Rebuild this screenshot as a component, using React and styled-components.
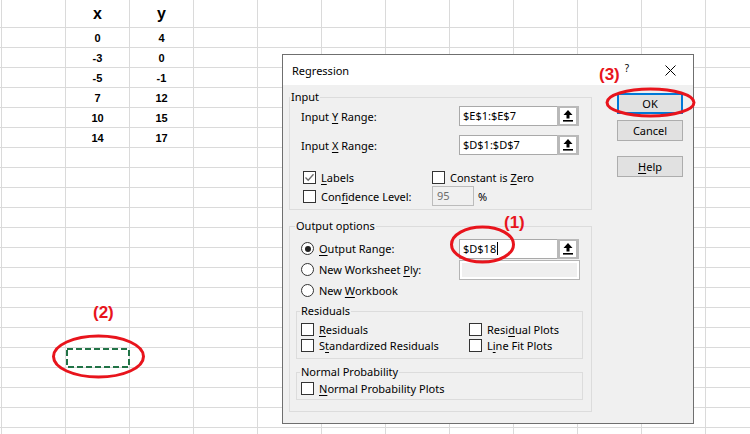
import React from "react";
import styled, { createGlobalStyle } from "styled-components";

const GlobalStyle = createGlobalStyle`
  html, body {
    margin: 0;
    padding: 0;
    background: #ffffff;
  }
  body {
    overflow: hidden;
  }
`;

const data = [
  ["x", "y"],
  ["0", "4"],
  ["-3", "0"],
  ["-5", "-1"],
  ["7", "12"],
  ["10", "15"],
  ["14", "17"],
];

const ROWS = 22;
const COLS = 13;

function UpArrow() {
  return (
    <svg width="10" height="12" viewBox="0 0 10 12">
      <polygon points="5,0 9.5,5 6.5,5 6.5,8.5 3.5,8.5 3.5,5 0.5,5" fill="#000" />
      <rect x="0" y="10" width="10" height="1.6" fill="#000" />
    </svg>
  );
}

function RefField({ value, caret }) {
  return (
    <FieldFrame>
      <TextBox>
        {value}
        {caret && <Caret />}
      </TextBox>
      <RefButton>
        <RefInner>
          <UpArrow />
        </RefInner>
      </RefButton>
    </FieldFrame>
  );
}

function Check({ checked, w, children }) {
  return (
    <ChoiceItem $w={w}>
      <Box>
        {checked && (
          <svg width="11" height="11" viewBox="0 0 11 11">
            <polyline points="1.5,5.5 4.2,8.3 9.5,2.2" fill="none" stroke="#6b6b6b" strokeWidth="1.3" />
          </svg>
        )}
      </Box>
      <span>{children}</span>
    </ChoiceItem>
  );
}

function Radio({ checked, w, children }) {
  return (
    <ChoiceItem $w={w}>
      <Round>{checked && <Dot />}</Round>
      <span>{children}</span>
    </ChoiceItem>
  );
}

export default function App() {
  return (
    <>
      <GlobalStyle />
      <Page>
        {/* spreadsheet behind */}
        <Sheet>
          {Array.from({ length: ROWS }).map((_, r) =>
            Array.from({ length: COLS }).map((_, c) => {
              let val = null;
              if (data[r] && c === 2) val = data[r][0];
              if (data[r] && c === 3) val = data[r][1];
              return (
                <Cell key={r + "-" + c} $head={r === 0}>
                  {val}
                </Cell>
              );
            })
          )}
        </Sheet>

        {/* dialog window */}
        <Dialog>
          <TitleBar>
            <Title>Regression</Title>
            <HelpMark>?</HelpMark>
            <svg width="11" height="11" viewBox="0 0 11 11">
              <path d="M0.5 0.5 L10.5 10.5 M10.5 0.5 L0.5 10.5" stroke="#000" strokeWidth="1" />
            </svg>
          </TitleBar>
          <Body>
            <Main>
              <Group $w={303}>
                <Legend $x={0}>Input</Legend>
                <FieldRow $mt={2}>
                  <FieldLabel>
                    Input <Key>Y</Key> Range:
                  </FieldLabel>
                  <RefField value="$E$1:$E$7" />
                </FieldRow>
                <FieldRow $mt={9}>
                  <FieldLabel>
                    Input <Key>X</Key> Range:
                  </FieldLabel>
                  <RefField value="$D$1:$D$7" />
                </FieldRow>
                <OptionRow $mt={13} $h={18} $pl={13}>
                  <Check checked w={129}>
                    <Key>L</Key>abels
                  </Check>
                  <Check>
                    Constant is <Key>Z</Key>ero
                  </Check>
                </OptionRow>
                <OptionRow $h={20} $pl={13} $mb={3}>
                  <Check w={129}>
                    Con<Key>f</Key>idence Level:
                  </Check>
                  <DisabledBox>95</DisabledBox>
                  <Percent>%</Percent>
                </OptionRow>
              </Group>

              <Group $w={303} $mt={9} $pb={11}>
                <Legend $x={5}>Output options</Legend>
                <RadioList>
                  <OptionRow $h={21} $pl={11}>
                    <Radio checked w={158}>
                      <Key>O</Key>utput Range:
                    </Radio>
                    <RefField value="$D$18" caret />
                  </OptionRow>
                  <OptionRow $h={21} $pl={11}>
                    <Radio w={158}>
                      New Worksheet <Key>P</Key>ly:
                    </Radio>
                    <BlankField />
                  </OptionRow>
                  <OptionRow $h={21} $pl={11}>
                    <Radio>
                      New <Key>W</Key>orkbook
                    </Radio>
                  </OptionRow>
                </RadioList>

                <Group $w={287} $mt={3} $ml={6} $pb={5}>
                  <Legend $x={3}>Residuals</Legend>
                  <OptionRow $mt={3} $h={16} $pl={4}>
                    <Check w={168}>
                      <Key>R</Key>esiduals
                    </Check>
                    <Check>
                      Resi<Key>d</Key>ual Plots
                    </Check>
                  </OptionRow>
                  <OptionRow $h={16} $pl={4}>
                    <Check w={168}>
                      S<Key>t</Key>andardized Residuals
                    </Check>
                    <Check>
                      L<Key>i</Key>ne Fit Plots
                    </Check>
                  </OptionRow>
                </Group>

                <Group $w={287} $mt={6} $ml={6} $pb={3}>
                  <Legend $x={3}>Normal Probability</Legend>
                  <OptionRow $mt={1} $h={16} $pl={4}>
                    <Check>
                      <Key>N</Key>ormal Probability Plots
                    </Check>
                  </OptionRow>
                </Group>
              </Group>
            </Main>

            <ButtonColumn>
              <Button $primary>OK</Button>
              <Button $mt={6}>Cancel</Button>
              <Button $mt={15}>
                <Key>H</Key>elp
              </Button>
            </ButtonColumn>
          </Body>
        </Dialog>

        {/* red annotations drawn on top */}
        <Marks width="750" height="434" viewBox="0 0 750 434">
          <rect x="67" y="349" width="62" height="18" fill="none" stroke="#217346" strokeWidth="2" strokeDasharray="6 3" />
          <ellipse cx="98.5" cy="356.5" rx="45" ry="20.5" fill="none" stroke="#e8141c" strokeWidth="3" />
          <ellipse cx="482.5" cy="244.5" rx="31" ry="17.5" fill="none" stroke="#e8141c" strokeWidth="3" />
          <ellipse cx="650.5" cy="102.5" rx="43.5" ry="13.5" fill="none" stroke="#e8141c" strokeWidth="3" />
        </Marks>
        <Note $x={599} $y={65}>(3)</Note>
        <Note $x={504} $y={213}>(1)</Note>
        <Note $x={93} $y={303}>(2)</Note>
      </Page>
    </>
  );
}

const Page = styled.div`
  position: relative;
  width: 750px;
  height: 434px;
  overflow: hidden;
  background: #ffffff;
`;

const Sheet = styled.div`
  display: grid;
  grid-template-columns: 2px repeat(12, 64px);
  grid-template-rows: 28px repeat(21, 20px);
`;

const Cell = styled.div`
  box-sizing: border-box;
  border-right: 1px solid #dadada;
  border-bottom: 1px solid #dadada;
  font-family: "Liberation Sans", Arial, sans-serif;
  font-weight: bold;
  font-size: ${(p) => (p.$head ? "16px" : "11px")};
  line-height: ${(p) => (p.$head ? "28px" : "19px")};
  padding-top: ${(p) => (p.$head ? "0" : "1px")};
  text-align: center;
  color: #000;
  overflow: hidden;
  white-space: nowrap;
`;

const Dialog = styled.div`
  position: absolute;
  left: 282px;
  top: 54px;
  width: 412px;
  height: 370px;
  box-sizing: border-box;
  border: 1px solid #6f6f6f;
  background: #f0f0f0;
  font-family: "Noto Sans", "Open Sans", sans-serif;
  font-size: 11px;
  color: #000;
`;

const TitleBar = styled.div`
  height: 30px;
  background: #ffffff;
  display: flex;
  align-items: center;
  padding: 0 17px 0 9px;
`;

const Title = styled.div`
  flex: 1;
  font-size: 11px;
`;

const HelpMark = styled.span`
  font-size: 10px;
  margin-right: 36px;
  margin-top: -4px;
`;

const Body = styled.div`
  display: flex;
  padding: 5px 0 0 6px;
`;

const Main = styled.div`
  width: 303px;
`;

const Group = styled.fieldset`
  box-sizing: border-box;
  width: ${(p) => p.$w}px;
  min-width: 0;
  margin: ${(p) => p.$mt || 0}px 0 0 ${(p) => p.$ml || 0}px;
  padding: 0 0 ${(p) => p.$pb || 0}px 0;
  border: 1px solid #dcdcdc;
`;

const Legend = styled.legend`
  margin-left: ${(p) => p.$x}px;
  padding: 0 1px;
  line-height: 14px;
  font-size: 11px;
`;

const FieldRow = styled.div`
  display: flex;
  align-items: center;
  height: 20px;
  margin-top: ${(p) => p.$mt || 0}px;
  padding-left: 11px;
`;

const FieldLabel = styled.div`
  width: 158px;
`;

const Key = styled.span`
  text-decoration: underline;
  text-underline-offset: 2px;
`;

const FieldFrame = styled.div`
  display: flex;
  height: 20px;
`;

const TextBox = styled.div`
  box-sizing: border-box;
  width: 98px;
  height: 20px;
  border: 1px solid #a9a9a9;
  border-right: none;
  background: #ffffff;
  padding-left: 3px;
  line-height: 18px;
  display: flex;
  align-items: center;
`;

const Caret = styled.span`
  display: inline-block;
  width: 1px;
  height: 13px;
  background: #000;
  margin-left: 1px;
`;

const RefButton = styled.div`
  box-sizing: border-box;
  width: 22px;
  height: 20px;
  background: #b9b9b9;
  padding: 2px 3px;
`;

const RefInner = styled.div`
  width: 100%;
  height: 100%;
  background: #ffffff;
  display: flex;
  align-items: center;
  justify-content: center;
`;

const BlankField = styled.div`
  box-sizing: border-box;
  width: 121px;
  height: 20px;
  border: 1px solid #b4b4b4;
  background: #efefef;
  box-shadow: inset 0 0 0 2px #ffffff;
`;

const OptionRow = styled.div`
  display: flex;
  align-items: center;
  height: ${(p) => p.$h}px;
  margin-top: ${(p) => p.$mt || 0}px;
  margin-bottom: ${(p) => p.$mb || 0}px;
  padding-left: ${(p) => p.$pl || 0}px;
`;

const RadioList = styled.div`
  margin-top: 5px;
`;

const ChoiceItem = styled.label`
  display: flex;
  align-items: center;
  gap: 5px;
  width: ${(p) => (p.$w ? p.$w + "px" : "auto")};
  white-space: nowrap;
`;

const Box = styled.span`
  box-sizing: border-box;
  width: 13px;
  height: 13px;
  border: 1px solid #333333;
  background: #ffffff;
  display: flex;
  align-items: center;
  justify-content: center;
  flex: none;
`;

const Round = styled.span`
  box-sizing: border-box;
  width: 13px;
  height: 13px;
  border: 1px solid #333333;
  border-radius: 50%;
  background: #ffffff;
  display: flex;
  align-items: center;
  justify-content: center;
  flex: none;
`;

const Dot = styled.span`
  width: 6px;
  height: 6px;
  border-radius: 50%;
  background: #222222;
`;

const DisabledBox = styled.div`
  box-sizing: border-box;
  width: 42px;
  height: 20px;
  border: 1px solid #bcbcbc;
  background: #f0f0f0;
  color: #6d6d6d;
  padding-left: 4px;
  line-height: 18px;
`;

const Percent = styled.span`
  margin-left: 4px;
`;

const ButtonColumn = styled.div`
  display: flex;
  flex-direction: column;
  margin-left: 25px;
  padding-top: 3px;
`;

const Button = styled.div`
  box-sizing: border-box;
  width: 66px;
  height: 21px;
  margin-top: ${(p) => p.$mt || 0}px;
  background: #e1e1e1;
  border: ${(p) => (p.$primary ? "2px solid #0078d7" : "1px solid #adadad")};
  display: flex;
  align-items: center;
  justify-content: center;
`;

const Marks = styled.svg`
  position: absolute;
  left: 0;
  top: 0;
  pointer-events: none;
`;

const Note = styled.span`
  position: absolute;
  left: ${(p) => p.$x}px;
  top: ${(p) => p.$y}px;
  font-family: "Liberation Sans", Arial, sans-serif;
  font-weight: bold;
  font-size: 17px;
  line-height: 20px;
  color: #e8141c;
`;
